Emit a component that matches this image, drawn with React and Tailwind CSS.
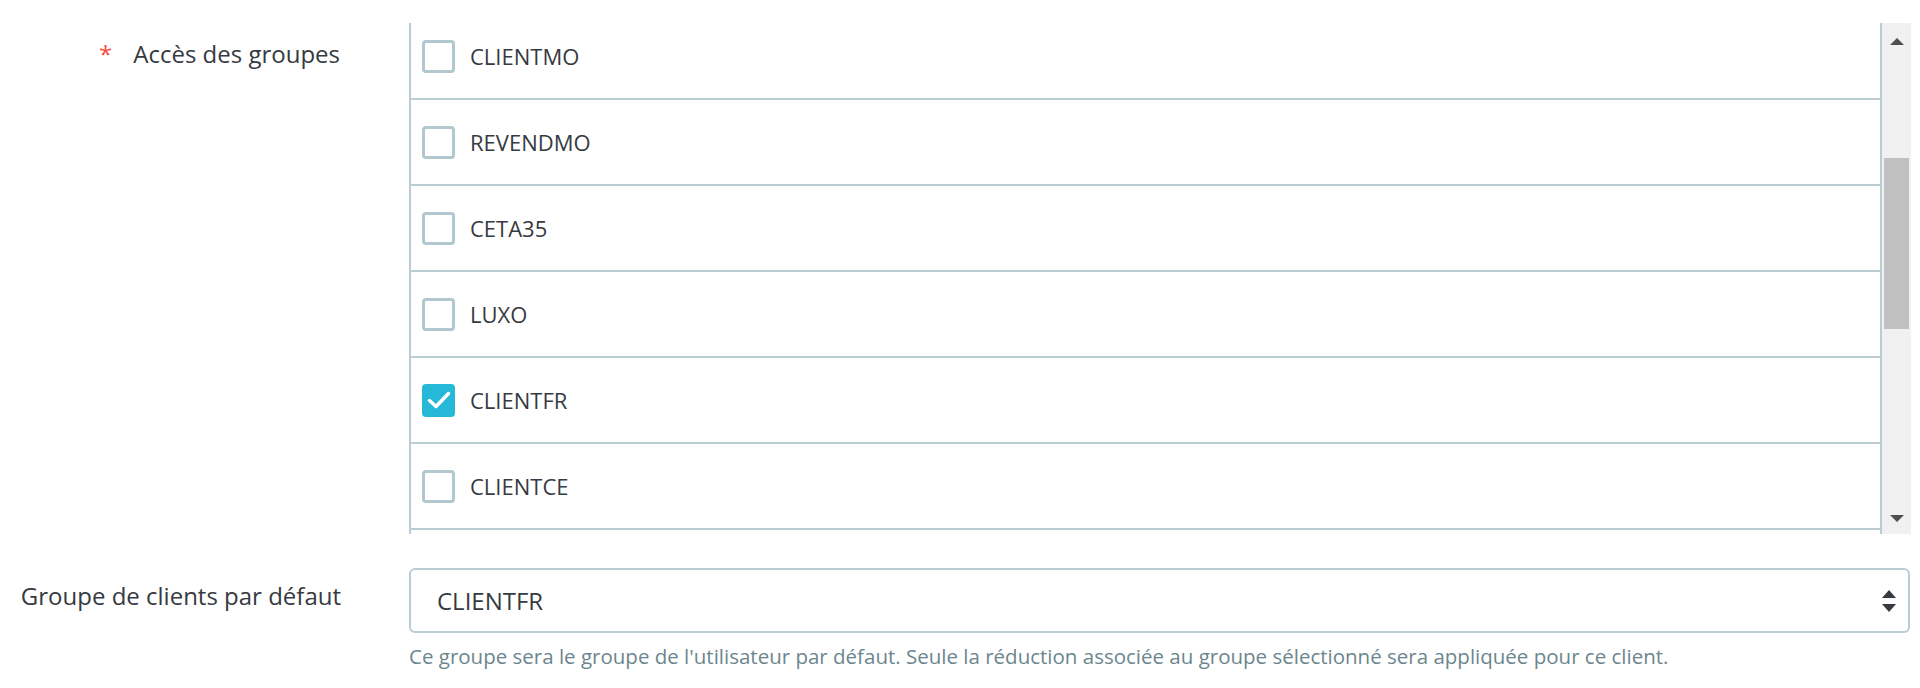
import React from 'react';

const groups = [
  { name: 'CLIENTMO', checked: false },
  { name: 'REVENDMO', checked: false },
  { name: 'CETA35', checked: false },
  { name: 'LUXO', checked: false },
  { name: 'CLIENTFR', checked: true },
  { name: 'CLIENTCE', checked: false },
  { name: '', checked: false },
];

const Checkbox = ({ checked }) =>
  checked ? (
    <span className="w-[33px] h-[33px] rounded-[4px] bg-[#25b9d7] flex items-center justify-center shrink-0">
      <svg width="24" height="20" viewBox="0 0 24 20" fill="none">
        <path d="M2.5 10.5 L9 16.5 L21.5 3.5" stroke="white" strokeWidth="3.5" strokeLinecap="round" strokeLinejoin="round" />
      </svg>
    </span>
  ) : (
    <span className="w-[33px] h-[33px] rounded-[4px] border-[3px] border-[#b0c8ce] bg-white shrink-0" />
  );

const FakeScrollbar = () => (
  <div className="w-[29px] shrink-0 bg-[#f1f1f1] flex flex-col items-center">
    <svg className="mt-[15px]" width="14" height="7" viewBox="0 0 14 7">
      <path d="M0 7 L7 0 L14 7 Z" fill="#505050" />
    </svg>
    <div className="w-[25px] h-[171px] bg-[#c1c1c1] mt-[113px]" />
    <div className="flex-1" />
    <svg className="mb-[12px]" width="14" height="7" viewBox="0 0 14 7">
      <path d="M0 0 L14 0 L7 7 Z" fill="#505050" />
    </svg>
  </div>
);

export default function App() {
  return (
    <div className="min-h-[688px] bg-white text-[#363a41] font-['Open_Sans',sans-serif]">
      {/* Accès des groupes */}
      <div className="flex pt-[23px]">
        <div className="w-[409px] shrink-0 pr-[69px] flex justify-end pt-[15px]">
          <span className="text-[24px] leading-[32px] flex">
            <span className="text-[#f54c3e] mr-[21px]">*</span>
            Accès des groupes
          </span>
        </div>
        <div className="w-[1502px] h-[511px] flex shrink-0">
          <div className="flex-1 border-x-2 border-[#bbcdd2] overflow-hidden">
            <div className="-mt-[9px]">
              {groups.map((g, i) => (
                <label
                  key={i}
                  className="h-[86px] border-b-2 border-[#bbcdd2] flex items-center pl-[11px] gap-[15px]"
                >
                  <Checkbox checked={g.checked} />
                  <span className="text-[22px] leading-[30px] text-[#363a41]">{g.name}</span>
                </label>
              ))}
            </div>
          </div>
          <FakeScrollbar />
        </div>
      </div>

      {/* Groupe de clients par défaut */}
      <div className="flex pt-[34px]">
        <div className="w-[409px] shrink-0 pr-[68px] flex justify-end pt-[12px]">
          <span className="text-[24px] leading-[32px]">Groupe de clients par défaut</span>
        </div>
        <div className="w-[1501px] shrink-0">
          <div className="h-[65px] border-2 border-[#bbcdd2] rounded-[6px] flex items-center pl-[26px] pr-[12px]">
            <span className="flex-1 text-[24px] leading-[32px]">CLIENTFR</span>
            <svg width="14" height="22" viewBox="0 0 14 22">
              <path d="M0 8 L7 0 L14 8 Z" fill="#363a41" />
              <path d="M0 14 L14 14 L7 22 Z" fill="#363a41" />
            </svg>
          </div>
          <p className="mt-[9px] text-[20.5px] leading-[28px] text-[#6c868e]">
            Ce groupe sera le groupe de l'utilisateur par défaut. Seule la réduction associée au groupe sélectionné sera appliquée pour ce client.
          </p>
        </div>
      </div>
    </div>
  );
}
